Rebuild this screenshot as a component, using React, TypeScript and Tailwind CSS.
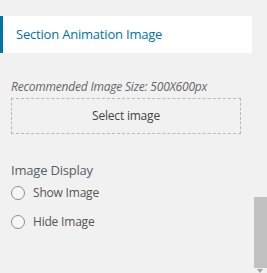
export default function App() {
  return (
    <div className="relative w-[267px] h-[273px] overflow-hidden bg-[#f1f1f1] font-['Open_Sans',sans-serif]">
      <div className="w-[252px] pt-4">
        <div className="h-[37px] bg-white border-l-[3px] border-[#0073aa] flex items-center pl-[13px]">
          <span className="text-[13px] text-[#0073aa] tracking-[-0.2px]">Section Animation Image</span>
        </div>

        <div className="px-[11px] pt-[26px]">
          <p className="italic text-[12px] leading-[16px] text-[#666] tracking-[-0.2px]">
            Recommended Image Size: 500X600px
          </p>
          <div className="mt-[3px] w-[230px] h-[36px] border border-dashed border-[#b4b9be] flex items-center justify-center">
            <span className="text-[12px] text-[#444] tracking-[-0.2px]">Select image</span>
          </div>

          <div className="mt-[27px] text-[13px] text-[#555d66] tracking-[-0.2px] leading-[18px]">Image Display</div>

          <div className="mt-[6px] flex flex-col gap-[13px]">
            {["Show Image", "Hide Image"].map((label) => (
              <label key={label} className="flex items-center gap-[8px] h-[16px]">
                <span className="w-[14px] h-[14px] rounded-full border border-[#8c8f94] bg-[#f7f7f7]" />
                <span className="text-[12px] text-[#555] tracking-[-0.2px]">{label}</span>
              </label>
            ))}
          </div>
        </div>
      </div>

      <div className="absolute right-0 top-[197px] w-[13px] h-[71px] bg-[#c1c1c1]" />
      <div className="absolute right-[4px] bottom-0 w-0 h-0 border-l-[3px] border-r-[3px] border-t-[4px] border-l-transparent border-r-transparent border-t-[#a3a3a3]" />
    </div>
  );
}
